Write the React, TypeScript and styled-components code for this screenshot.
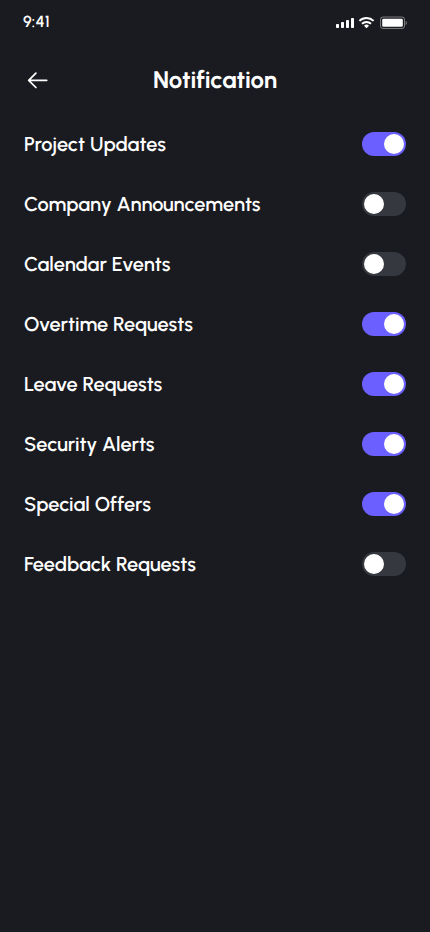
import React, { useState } from "react";
import styled, { createGlobalStyle } from "styled-components";

const GlobalStyle = createGlobalStyle`
  * { box-sizing: border-box; }
  body {
    margin: 0;
    background: #1a1b20;
    color: #fff;
    font-family: Urbanist, Lato, sans-serif;
    text-rendering: geometricPrecision;
  }
`;

const Screen = styled.main`
  display: flex;
  flex-direction: column;
  width: 100%;
  min-height: 100vh;
  background: #1a1b20;
`;

const StatusBar = styled.div`
  display: flex;
  align-items: center;
  justify-content: space-between;
  height: 44px;
  padding: 0 23px;
`;

const Time = styled.span`
  font-size: 16px;
  font-weight: 600;
  line-height: 20px;
  letter-spacing: 0.2px;
`;

const StatusIcons = styled.svg`
  display: block;
  width: 72px;
  height: 16px;
`;

const Header = styled.header`
  display: grid;
  grid-template-columns: 28px 1fr 28px;
  align-items: center;
  height: 72px;
  padding: 0 24px;
`;

const BackButton = styled.button`
  display: flex;
  padding: 0;
  border: 0;
  background: none;
  color: #fff;
  cursor: pointer;
`;

const Title = styled.h1`
  margin: 0;
  font-size: 24px;
  font-weight: 700;
  line-height: 32px;
  text-align: center;
`;

const List = styled.ul`
  display: flex;
  flex-direction: column;
  gap: 36px;
  margin: 0;
  padding: 16px 24px;
  list-style: none;
`;

const Item = styled.li`
  display: flex;
  align-items: center;
  justify-content: space-between;
  height: 24px;
`;

const Label = styled.span`
  font-size: 20px;
  font-weight: 600;
  line-height: 24px;
`;

const Switch = styled.button<{ $on: boolean }>`
  display: flex;
  align-items: center;
  justify-content: ${(p) => (p.$on ? "flex-end" : "flex-start")};
  width: 44px;
  height: 24px;
  padding: 2px;
  border: 0;
  border-radius: 12px;
  background: ${(p) => (p.$on ? "#6c5fff" : "#35383f")};
  cursor: pointer;
`;

const Knob = styled.span`
  width: 20px;
  height: 20px;
  border-radius: 50%;
  background: #fff;
`;

const settings = [
  { label: "Project Updates", on: true },
  { label: "Company Announcements", on: false },
  { label: "Calendar Events", on: false },
  { label: "Overtime Requests", on: true },
  { label: "Leave Requests", on: true },
  { label: "Security Alerts", on: true },
  { label: "Special Offers", on: true },
  { label: "Feedback Requests", on: false },
];

export default function App() {
  const [values, setValues] = useState(settings.map((s) => s.on));
  const toggle = (index: number) =>
    setValues((current) => current.map((v, i) => (i === index ? !v : v)));

  return (
    <Screen>
      <GlobalStyle />
      <StatusBar>
        <Time>9:41</Time>
        <StatusIcons viewBox="0 0 72 16" fill="#fff" aria-hidden="true">
          <rect x="1" y="10" width="3" height="4" rx="0.8" />
          <rect x="6" y="8" width="3" height="6" rx="0.8" />
          <rect x="11" y="6" width="3" height="8" rx="0.8" />
          <rect x="16" y="4" width="3" height="10" rx="0.8" />
          <g fill="none" stroke="#fff" strokeWidth="2">
            <path d="M24.4 6.9a10.3 10.3 0 0 1 14.2 0" />
            <path d="M27 9.7a6.6 6.6 0 0 1 9 0" />
          </g>
          <path d="M29 11.7a3.7 3.7 0 0 1 5 0l-2.5 2.5z" />
          <rect x="45.5" y="3" width="24" height="11.5" rx="2.5" fill="none" stroke="#fff" strokeOpacity="0.42" />
          <rect x="47.2" y="4.7" width="20.6" height="8.1" rx="1.2" />
          <path d="M70.6 7v4c.8-.3 1.3-1.1 1.3-2s-.5-1.7-1.3-2z" fillOpacity="0.42" />
        </StatusIcons>
      </StatusBar>
      <Header>
        <BackButton aria-label="Back">
          <svg width="28" height="28" viewBox="0 0 28 28" fill="none" stroke="currentColor" strokeWidth="1.75" strokeLinecap="round" strokeLinejoin="round">
            <path d="M22.7 14.3H4.7M11.9 7.2L4.7 14.3l7.2 7.2" />
          </svg>
        </BackButton>
        <Title>Notification</Title>
      </Header>
      <List>
        {settings.map((s, i) => (
          <Item key={s.label}>
            <Label>{s.label}</Label>
            <Switch role="switch" aria-checked={values[i]} aria-label={s.label} $on={values[i]} onClick={() => toggle(i)}>
              <Knob />
            </Switch>
          </Item>
        ))}
      </List>
    </Screen>
  );
}
